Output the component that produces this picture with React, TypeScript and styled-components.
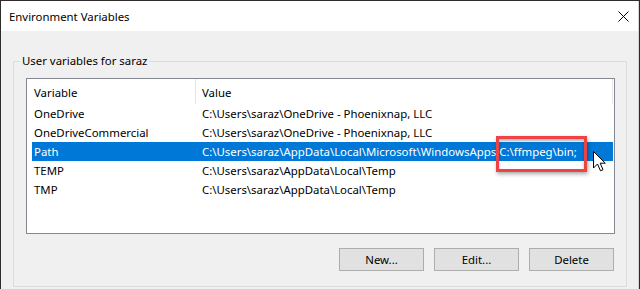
import React from "react";
import styled, { createGlobalStyle } from "styled-components";

const GlobalStyle = createGlobalStyle`
  html, body { margin: 0; padding: 0; background: #2e2c2b; overflow: hidden; }
  body { font-family: "Noto Sans", "Liberation Sans", sans-serif; }
  * { box-sizing: border-box; }
`;

const Window = styled.div`
  margin: 1px 1px 0 1px;
  width: 638px;
  height: 288px;
  background: #f0f0f0;
  border-right: 1px solid #d6d6d6;
  display: flex;
  flex-direction: column;
  font-size: 11.4px;
  color: #000;
`;

const TitleBar = styled.div`
  height: 30px;
  background: #fff;
  display: flex;
  align-items: center;
  justify-content: space-between;
  padding: 0 9px 0 8px;
  flex-shrink: 0;
`;

const Title = styled.span`
  font-size: 11.4px;
  color: #000;
`;

const Body = styled.div`
  padding: 30px 11px 0 12px;
`;

const GroupBox = styled.div`
  position: relative;
  border: 1px solid #dcdcdc;
  height: 226px;
  padding: 16px 11px 0 12px;
  display: flex;
  flex-direction: column;
`;

const GroupLabel = styled.span`
  position: absolute;
  left: 6px;
  top: -9px;
  padding: 0 2px;
  line-height: 16px;
  background: #f0f0f0;
`;

const ListBox = styled.div`
  height: 156px;
  border: 1px solid #828790;
  background: #fff;
  display: flex;
  flex-direction: column;
`;

const Header = styled.div`
  height: 25px;
  display: grid;
  grid-template-columns: 162px 1fr;
  align-items: center;
  margin: 0 1px 0 5px;
  padding-left: 2px;
  border-right: 1px solid #e8e8e8;
`;

const HeaderCell = styled.div<{ $divider?: boolean; $indent?: number }>`
  height: 100%;
  display: flex;
  align-items: center;
  padding-top: 1px;
  padding-left: ${(p) => p.$indent ?? 0}px;
  border-right: ${(p) => (p.$divider ? "1px solid #e5e5e5" : "none")};
`;

const Row = styled.div<{ $selected?: boolean }>`
  position: relative;
  height: 19px;
  line-height: 19px;
  display: grid;
  grid-template-columns: 168px 1fr;
  margin: 0 1px 0 5px;
  padding-left: 2px;
  white-space: nowrap;
  background: ${(p) => (p.$selected ? "#0078d7" : "transparent")};
  color: ${(p) => (p.$selected ? "#fff" : "#000")};
`;

const Cell = styled.span`
  overflow: visible;
`;

const Highlight = styled.div`
  position: absolute;
  left: 464px;
  top: -6px;
  width: 91px;
  height: 36px;
  border: 3px solid #ec4446;
  box-shadow: 1px 2px 4px rgba(0, 0, 0, 0.35), inset 0 2px 3px rgba(0, 0, 0, 0.3);
  pointer-events: none;
`;

const Cursor = styled.svg`
  position: absolute;
  left: 561px;
  top: 9px;
  width: 13px;
  height: 21px;
  overflow: visible;
`;

const ButtonRow = styled.div`
  margin-top: 14px;
  display: flex;
  justify-content: flex-end;
  gap: 10px;
  padding-right: 1px;
`;

const Button = styled.button`
  width: 85px;
  height: 23px;
  background: #e1e1e1;
  border: 1px solid #adadad;
  font-family: "Noto Sans", "Liberation Sans", sans-serif;
  font-size: 11.4px;
  color: #000;
  padding: 0;
  border-radius: 0;
`;

const CloseIcon = () => (
  <svg width="11" height="11" viewBox="0 0 11 11">
    <path d="M0.5 0.5 L10.5 10.5 M10.5 0.5 L0.5 10.5" stroke="#000" strokeWidth="1" fill="none" />
  </svg>
);

const rows = [
  { name: "OneDrive", value: "C:\\Users\\saraz\\OneDrive - Phoenixnap, LLC" },
  { name: "OneDriveCommercial", value: "C:\\Users\\saraz\\OneDrive - Phoenixnap, LLC" },
  {
    name: "Path",
    value: "C:\\Users\\saraz\\AppData\\Local\\Microsoft\\WindowsApps;C:\\ffmpeg\\bin;",
    selected: true,
  },
  { name: "TEMP", value: "C:\\Users\\saraz\\AppData\\Local\\Temp" },
  { name: "TMP", value: "C:\\Users\\saraz\\AppData\\Local\\Temp" },
];

export default function App() {
  return (
    <>
      <GlobalStyle />
      <Window>
        <TitleBar>
          <Title>Environment Variables</Title>
          <CloseIcon />
        </TitleBar>
        <Body>
          <GroupBox>
            <GroupLabel>User variables for saraz</GroupLabel>
            <ListBox>
              <Header>
                <HeaderCell $divider>Variable</HeaderCell>
                <HeaderCell $indent={6}>Value</HeaderCell>
              </Header>
              {rows.map((r) => (
                <Row key={r.name} $selected={r.selected}>
                  <Cell>{r.name}</Cell>
                  <Cell>{r.value}</Cell>
                  {r.selected && (
                    <>
                      <Highlight />
                      <Cursor viewBox="0 0 13 21">
                        <path
                          d="M0.5 0.5 L0.5 17 L4.5 13 L7.5 19.8 L10 18.7 L7.2 12.2 L12.3 12.2 Z"
                          fill="#fff"
                          stroke="#000"
                          strokeWidth="1"
                          strokeLinejoin="miter"
                        />
                      </Cursor>
                    </>
                  )}
                </Row>
              ))}
            </ListBox>
            <ButtonRow>
              <Button>New...</Button>
              <Button>Edit...</Button>
              <Button>Delete</Button>
            </ButtonRow>
          </GroupBox>
        </Body>
      </Window>
    </>
  );
}
